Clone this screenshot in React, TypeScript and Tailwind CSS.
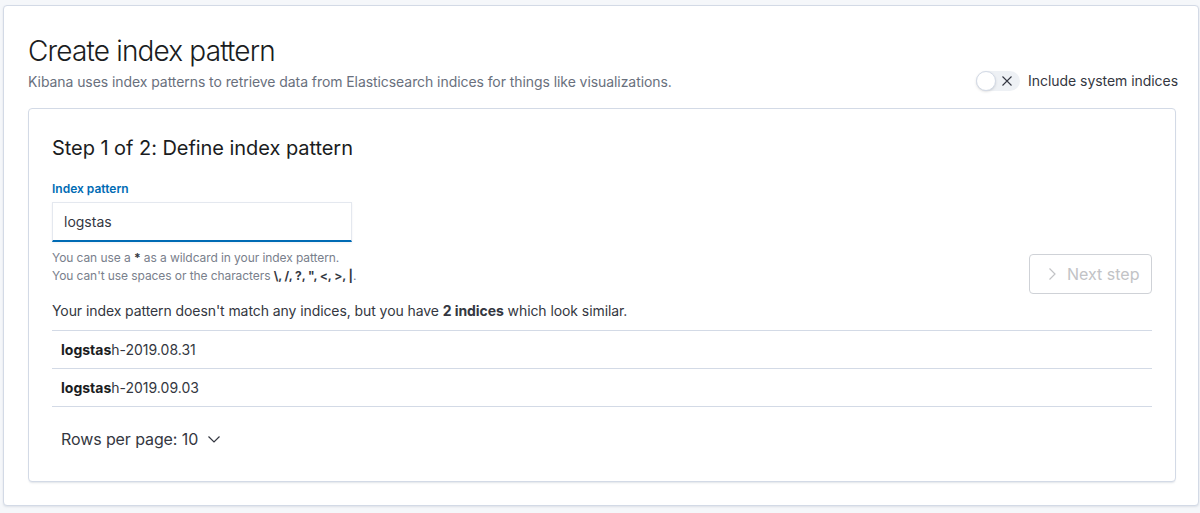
import React, { useState } from 'react';

const indices = [
  { match: 'logstas', rest: 'h-2019.08.31' },
  { match: 'logstas', rest: 'h-2019.09.03' },
];

export default function App() {
  const [pattern, setPattern] = useState('logstas');
  const [includeSystem, setIncludeSystem] = useState(false);

  return (
    <div className="min-h-[513px] bg-[#f5f7fa] pt-[5px] pl-[3px] pr-px font-['Inter','Liberation_Sans',sans-serif] text-[#343741]">
      <div className="h-[501px] rounded border border-[#d3dae6] bg-white pl-6 pr-[22px] pt-[27px] shadow-[0_1px_2px_rgba(152,162,179,0.25)]">
        {/* Header */}
        <div className="flex items-end justify-between">
          <div>
            <h1 className="text-[28px] leading-9 font-light tracking-[-0.03em] text-[#1a1c21]">Create index pattern</h1>
            <p className="mt-[3px] text-sm leading-5 tracking-[-0.07px] text-[#69707d]">
              Kibana uses index patterns to retrieve data from Elasticsearch indices for things like visualizations.
            </p>
          </div>
          <label className="mr-[-2px] flex cursor-pointer items-center gap-2 pb-[1px]">
            <button
              onClick={() => setIncludeSystem(!includeSystem)}
              className="relative flex h-5 w-11 items-center rounded-full bg-[#eef1f5]"
            >
              <span className="absolute left-0 top-0 h-5 w-5 rounded-full border border-[#d3dae6] bg-white shadow-sm" />
              <svg className="absolute left-[25px] top-[4px]" width="12" height="12" viewBox="0 0 12 12" fill="none" stroke="#343741" strokeWidth="1.1">
                <path d="M1.5 1.5l9 9M10.5 1.5l-9 9" />
              </svg>
            </button>
            <span className="text-sm leading-5 tracking-[-0.05px] text-[#343741]">Include system indices</span>
          </label>
        </div>

        {/* Step panel */}
        <div className="mt-4 h-[374px] rounded border border-[#d3dae6] bg-white px-[23px] pt-[25px] shadow-[0_2px_2px_-1px_rgba(152,162,179,0.3)]">
          <h2 className="text-xl leading-7 font-normal tracking-[-0.05px] text-[#1a1c21]">Step 1 of 2: Define index pattern</h2>

          <div className="flex items-start justify-between">
            <div>
              <div className="mt-[18px] text-xs leading-[18px] font-semibold text-[#006bb4]">Index pattern</div>
              <div className="mt-[4px] flex h-10 w-[300px] items-center border border-b-2 border-[#e4e8ef] border-b-[#006bb4] bg-white pl-[11px] shadow-[0_1px_2px_rgba(152,162,179,0.15)]">
                <input
                  value={pattern}
                  onChange={(e) => setPattern(e.target.value)}
                  className="w-full bg-transparent text-sm text-[#343741] outline-none"
                />
              </div>
              <div className="mt-[7px] text-xs leading-[18px] tracking-[-0.08px] text-[#79808c]">
                <p>You can use a <b className="font-bold text-[#343741]">*</b> as a wildcard in your index pattern.</p>
                <p>
                  You can't use spaces or the characters{' '}
                  <span className="font-bold text-[#343741]">\, /, ?, ", &lt;, &gt;, |</span>.
                </p>
              </div>
            </div>
            <button
              disabled
              className="mt-[92px] -mb-10 flex h-10 w-[123px] items-center gap-[10px] rounded border border-[#cfd2d7] bg-white pl-[17px] text-base text-[#c2c3c6]"
            >
              <svg width="10" height="14" viewBox="0 0 10 14" fill="none" stroke="#c2c3c6" strokeWidth="1.2">
                <path d="M2.5 1.5l5.5 5.5-5.5 5.5" />
              </svg>
              Next step
            </button>
          </div>

          <p className="mt-[16px] text-sm leading-5 tracking-[-0.08px] text-[#343741]">
            Your index pattern doesn't match any indices, but you have <b className="font-bold">2 indices</b> which look similar.
          </p>

          {/* Matching indices */}
          <div className="mt-[9px] border-t border-[#d3dae6]">
            {indices.map((idx) => (
              <div key={idx.rest} className="flex h-[38px] items-center border-b border-[#d3dae6] pl-[9px] text-sm text-[#343741]">
                <b className="font-bold text-[#1a1c21]">{idx.match}</b>
                {idx.rest}
              </div>
            ))}
          </div>

          {/* Pagination */}
          <button className="mt-[20px] flex items-center gap-[9px] pl-[9px] text-base leading-6 tracking-[-0.1px] text-[#343741]">
            Rows per page: 10
            <svg width="14" height="10" viewBox="0 0 14 10" fill="none" stroke="#343741" strokeWidth="1.2">
              <path d="M1.5 2.5l5.5 5.5 5.5-5.5" />
            </svg>
          </button>
        </div>
      </div>
    </div>
  );
}
